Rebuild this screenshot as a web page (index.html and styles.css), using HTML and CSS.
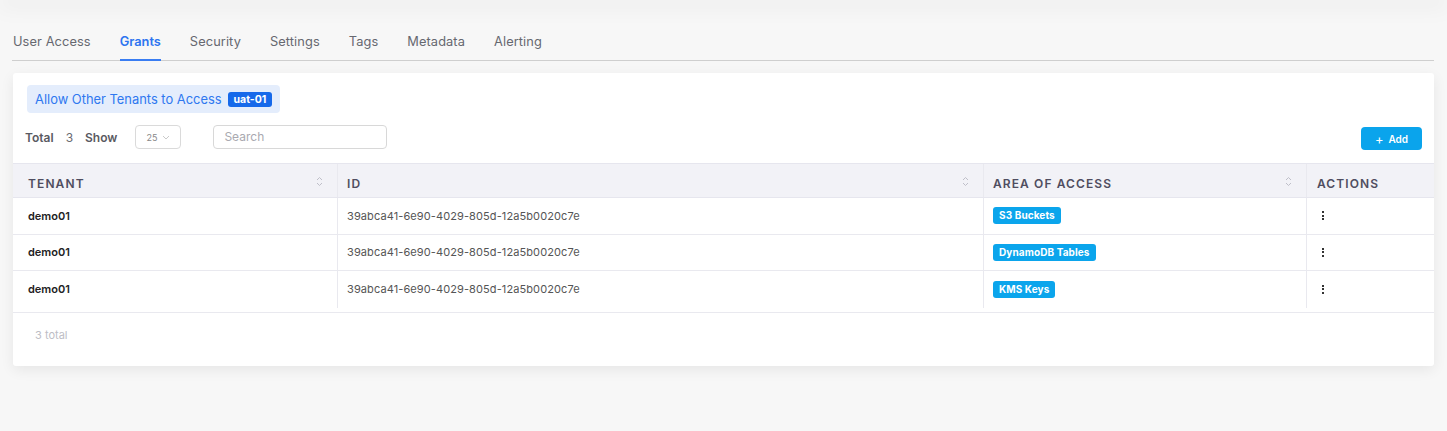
FILE: index.html
```html
<!DOCTYPE html>
<html lang="en">
<head>
<meta charset="utf-8">
<title>Grants</title>
<link rel="stylesheet" href="styles.css">
</head>
<body>
<div class="top-shadow"></div>
<nav class="tabs">
  <a class="tab">User Access</a>
  <a class="tab active">Grants</a>
  <a class="tab">Security</a>
  <a class="tab">Settings</a>
  <a class="tab">Tags</a>
  <a class="tab">Metadata</a>
  <a class="tab">Alerting</a>
</nav>
<section class="card">
  <div class="card-head">
    <div class="banner">Allow Other Tenants to Access <span class="badge-dark">uat-01</span></div>
    <div class="toolbar">
      <div class="toolbar-left">
        <span class="lbl">Total</span>
        <span class="count">3</span>
        <span class="lbl">Show</span>
        <div class="select"><span>25</span><svg width="8" height="5" viewBox="0 0 8 5"><path d="M1 1l3 3 3-3" fill="none" stroke="#c4c4c4" stroke-width="0.9"/></svg></div>
        <div class="search">Search</div>
      </div>
      <button class="add-btn"><span class="plus">+</span> Add</button>
    </div>
  </div>
  <div class="table">
    <div class="row head">
      <div class="cell c1">TENANT<span class="sort"><svg width="7" height="11" viewBox="0 0 7 11"><path d="M1 4l2.5-2.5L6 4M1 7l2.5 2.5L6 7" fill="none" stroke="#b9b9c3" stroke-width="0.9"/></svg></span></div>
      <div class="cell c2">ID<span class="sort"><svg width="7" height="11" viewBox="0 0 7 11"><path d="M1 4l2.5-2.5L6 4M1 7l2.5 2.5L6 7" fill="none" stroke="#b9b9c3" stroke-width="0.9"/></svg></span></div>
      <div class="cell c3">AREA OF ACCESS<span class="sort"><svg width="7" height="11" viewBox="0 0 7 11"><path d="M1 4l2.5-2.5L6 4M1 7l2.5 2.5L6 7" fill="none" stroke="#b9b9c3" stroke-width="0.9"/></svg></span></div>
      <div class="cell c4">ACTIONS</div>
    </div>
    <div class="row">
      <div class="cell c1 tenant">demo01</div>
      <div class="cell c2 id">39abca41-6e90-4029-805d-12a5b0020c7e</div>
      <div class="cell c3"><span class="pill">S3 Buckets</span></div>
      <div class="cell c4"><span class="kebab"><i></i><i></i><i></i></span></div>
    </div>
    <div class="row">
      <div class="cell c1 tenant">demo01</div>
      <div class="cell c2 id">39abca41-6e90-4029-805d-12a5b0020c7e</div>
      <div class="cell c3"><span class="pill">DynamoDB Tables</span></div>
      <div class="cell c4"><span class="kebab"><i></i><i></i><i></i></span></div>
    </div>
    <div class="row last">
      <div class="cell c1 tenant">demo01</div>
      <div class="cell c2 id">39abca41-6e90-4029-805d-12a5b0020c7e</div>
      <div class="cell c3"><span class="pill">KMS Keys</span></div>
      <div class="cell c4"><span class="kebab"><i></i><i></i><i></i></span></div>
    </div>
  </div>
  <div class="card-foot">3 total</div>
</section>
</body>
</html>
```

FILE: styles.css
```css
* { box-sizing: border-box; }
html, body { margin: 0; padding: 0; }
body {
  background: #f7f7f7;
  font-family: Inter, "Noto Sans", sans-serif;
  color: #333;
  width: 1447px;
  height: 431px;
  overflow: hidden;
}
.top-shadow {
  height: 1px;
  margin-top: -1px;
  background: #e6e6e6;
  box-shadow: 0 2px 22px 2px rgba(0,0,0,0.13);
}
.tabs {
  display: flex;
  gap: 29px;
  margin: 0 13px 0 12px;
  padding: 34px 0 0 1px;
  border-bottom: 1px solid #cfcfcf;
}
.tab {
  font-size: 12.8px;
  color: #666870;
  line-height: 16px;
  padding-bottom: 9px;
  border-bottom: 2px solid transparent;
  margin-bottom: -1px;
  letter-spacing: 0.1px;
}
.tab.active {
  color: #2d74f0;
  font-weight: 600;
  letter-spacing: 0;
  border-bottom-color: #3a7df2;
}
.card {
  margin: 12px 13px 0 13px;
  background: #fff;
  border-radius: 3px;
  box-shadow: 0 4px 14px rgba(0,0,0,0.07);
}
.card-head {
  padding: 12px 12px 13px 12px;
}
.banner {
  display: inline-flex;
  align-items: center;
  gap: 6px;
  height: 28px;
  padding: 0 8px 0 8px;
  margin-left: 2px;
  background: #e4edfc;
  border-radius: 4px;
  color: #2e78f0;
  font-size: 12.9px;
}
.badge-dark {
  background: #1669ea;
  color: #fff;
  font-size: 10.5px;
  font-weight: 700;
  padding: 1px 6px;
  border-radius: 3px;
  line-height: 13px;
}
.toolbar {
  display: flex;
  justify-content: space-between;
  align-items: flex-start;
  margin-top: 12px;
}
.toolbar-left {
  display: flex;
  align-items: center;
  height: 24px;
}
.lbl {
  font-size: 12px;
  font-weight: 600;
  color: #5a5a62;
}
.count {
  font-size: 12px;
  color: #6a6a72;
  margin: 0 12px 0 12px;
}
.select {
  margin-left: 18px;
  width: 46px;
  height: 24px;
  border: 1px solid #dadada;
  border-radius: 4px;
  display: flex;
  align-items: center;
  gap: 5px;
  padding-left: 10px;
  font-size: 9px;
  color: #888;
}
.search {
  margin-left: 32px;
  width: 174px;
  height: 24px;
  border: 1px solid #d8d8d8;
  border-radius: 4px;
  font-size: 12px;
  color: #a9a9b0;
  padding-left: 10px;
  line-height: 22px;
}
.add-btn {
  margin-top: 2px;
  width: 61px;
  height: 23px;
  border: none;
  border-radius: 4px;
  background: #0aa4ec;
  color: #fff;
  font-family: Inter, sans-serif;
  font-size: 10px;
  font-weight: 600;
  display: flex;
  align-items: center;
  justify-content: center;
  gap: 2px;
  padding: 0;
}
.plus { font-size: 13px; font-weight: 400; margin-right: 3px; line-height: 10px; }
.table {
  border-top: 1px solid #e6e6ee;
}
.row {
  display: grid;
  grid-template-columns: 324px 646px 323px 1fr;
  height: 36.6px;
  border-bottom: 1px solid #e9e9ef;
}
.row.head {
  height: 34px;
  background: #f2f2f7;
  border-bottom: 1px solid #e6e6ee;
}
.row.last { border-bottom: none; height: 36.5px; }
.cell {
  display: flex;
  align-items: center;
  padding-left: 9px;
  border-left: 1px solid #e9e9ef;
  font-size: 11px;
  position: relative;
}
.cell.c1 { border-left: none; padding-left: 15px; }
.cell.c3 { padding-left: 9px; }
.cell.c4 { padding-left: 10px; }
.head .cell {
  font-size: 12px;
  font-weight: 600;
  letter-spacing: 1.1px;
  color: #4f4d60;
  padding-top: 5px;
}
.sort {
  position: absolute;
  right: 14px;
  top: 12px;
  display: flex;
}
.tenant { font-weight: 600; color: #222; }
.id { color: #555; letter-spacing: 0.1px; }
.pill {
  display: inline-block;
  background: #0ba5ec;
  color: #fff;
  font-size: 10px;
  font-weight: 700;
  padding: 2px 6px;
  border-radius: 3px;
  line-height: 13px;
  letter-spacing: 0.1px;
}
.kebab {
  display: flex;
  flex-direction: column;
  gap: 1.5px;
  margin-left: 5px;
}
.kebab i {
  display: block;
  width: 2px;
  height: 2px;
  background: #333;
}
.card-foot {
  margin-top: 4px;
  border-top: 1px solid #e9e9ef;
  height: 54px;
  padding: 15px 0 0 22px;
  font-size: 11px;
  color: #bdbdc5;
}
```
